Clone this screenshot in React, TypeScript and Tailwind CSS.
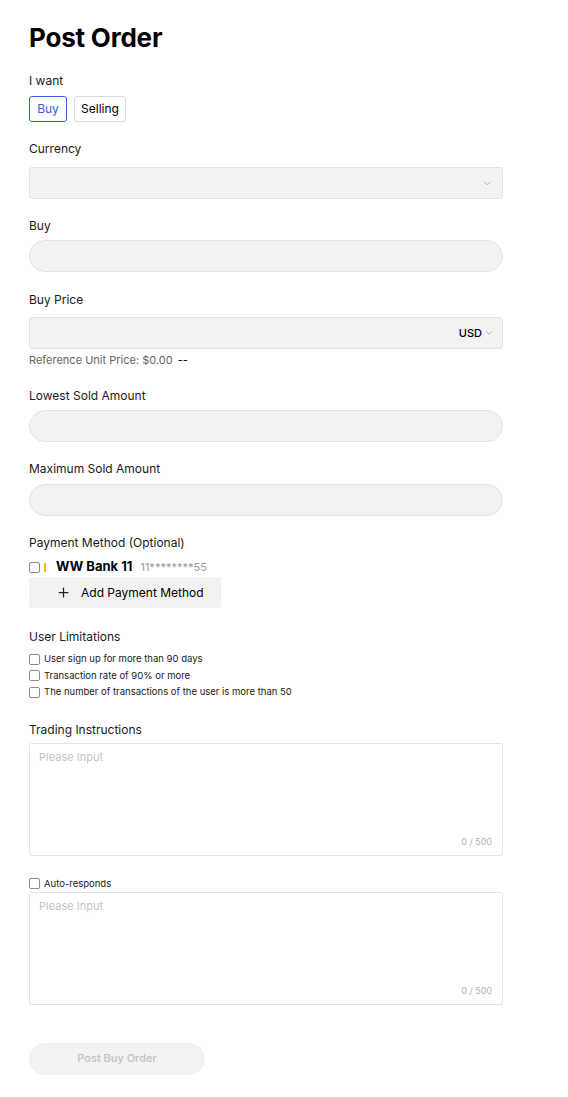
import React from 'react';
import { ChevronDown, Plus } from 'lucide-react';

const font = { fontFamily: 'Inter, "Noto Sans", sans-serif' };

function Label({ children, className = 'mb-[10px]' }: { children: React.ReactNode; className?: string }) {
    return <p className={`text-[12px] text-[#1a1a1a] leading-[16px] ${className}`}>{children}</p>;
}

function Pill() {
    return <div className="h-[32px] bg-[#f2f2f4] border border-[#e3e3e6] rounded-full" />;
}

function Check({ label, className = '' }: { label: string; className?: string }) {
    return (
        <label className={`flex items-center gap-[4px] text-[9.5px] text-[#1a1a1a] leading-[16px] ${className}`}>
            <span className="w-[11px] h-[11px] border border-[#8a8a8a] rounded-[2px] bg-white shrink-0" />
            {label}
        </label>
    );
}

function TextArea() {
    return (
        <div className="h-[113px] border border-[#e3e3e6] rounded-[3px] bg-white px-[9px] pt-[5px] pb-[6px] flex flex-col justify-between">
            <span className="text-[11px] text-[#c4c4c4]">Please Input</span>
            <span className="self-end text-[9px] text-[#b0b0b0] pr-[1px]">0 / 500</span>
        </div>
    );
}

export default function App() {
    return (
        <div style={font} className="bg-white min-h-[1097px] pl-[29px] pr-[65px] pt-[23px] text-[#111]">
            <h1 className="text-[26px] font-bold leading-[30px] tracking-[-0.2px] text-black">Post Order</h1>

            <div className="mt-[20px]">
                <p className="text-[12px] leading-[16px] text-[#1a1a1a]">I want</p>
                <div className="flex gap-[7px] mt-[7px]">
                    <button className="h-[26px] w-[38px] border border-[#3b5bdb] rounded-[3px] text-[12px] text-[#3b5bdb]">Buy</button>
                    <button className="h-[26px] w-[52px] border border-[#dcdcdc] rounded-[3px] text-[12px] text-black">Selling</button>
                </div>
            </div>

            <div className="mt-[19px]">
                <Label>Currency</Label>
                <div className="h-[32px] bg-[#f2f2f4] border border-[#e3e3e6] rounded-[3px] flex items-center justify-end pr-[9px]">
                    <ChevronDown className="w-[11px] h-[11px] text-[#a8a8a8]" strokeWidth={2} />
                </div>
            </div>

            <div className="mt-[19px]">
                <Label className="mb-[6px]">Buy</Label>
                <Pill />
            </div>

            <div className="mt-[20px]">
                <Label className="mb-[9px]">Buy Price</Label>
                <div className="h-[32px] bg-[#f2f2f4] border border-[#e3e3e6] rounded-[3px] flex items-center justify-end pr-[8px] gap-[2px]">
                    <span className="text-[11px] font-medium text-black">USD</span>
                    <ChevronDown className="w-[10px] h-[10px] text-[#a8a8a8]" strokeWidth={2} />
                </div>
                <p className="text-[11px] mt-[3px] leading-[16px] text-[#666]">
                    Reference Unit Price: $0.00 <span className="text-black ml-[2px]">--</span>
                </p>
            </div>

            <div className="mt-[20px]">
                <Label className="mb-[6px]">Lowest Sold Amount</Label>
                <Pill />
            </div>

            <div className="mt-[19px]">
                <Label className="mb-[7px]">Maximum Sold Amount</Label>
                <Pill />
            </div>

            <div className="mt-[19px]">
                <p className="text-[12px] leading-[16px] text-[#1a1a1a]">Payment Method (Optional)</p>
                <div className="flex items-center h-[18px] mt-[7px]">
                    <span className="w-[11px] h-[11px] border border-[#8a8a8a] rounded-[2px] bg-white shrink-0" />
                    <span className="w-[2px] h-[9px] bg-[#f0b90b] ml-[4px]" />
                    <span className="text-[13px] font-bold text-black ml-[10px]">WW Bank 11</span>
                    <span className="text-[11px] text-[#999] ml-[8px]">11********55</span>
                </div>
                <button className="mt-[1px] w-[192px] h-[31px] bg-[#f2f2f4] rounded-[3px] flex items-center pl-[27px] gap-[10px] text-[12px] text-black">
                    <Plus className="w-[15px] h-[15px] text-[#222]" strokeWidth={2} />
                    Add Payment Method
                </button>
            </div>

            <div className="mt-[21px]">
                <p className="text-[12px] leading-[16px] text-[#1a1a1a] mb-[6px]">User Limitations</p>
                <Check label="User sign up for more than 90 days" className="h-[16.5px]" />
                <Check label="Transaction rate of 90% or more" className="h-[16.5px]" />
                <Check label="The number of transactions of the user is more than 50" className="h-[16.5px]" />
            </div>

            <div className="mt-[21px]">
                <p className="text-[12px] leading-[16px] text-[#1a1a1a] mb-[5px]">Trading Instructions</p>
                <TextArea />
            </div>

            <div className="mt-[20px]">
                <Check label="Auto-responds" className="h-[16px] mb-[0px]" />
                <TextArea />
            </div>

            <button className="mt-[38px] w-[176px] h-[32px] rounded-full bg-[#f2f2f4] text-[11px] font-medium text-[#c2c2c2]">
                Post Buy Order
            </button>
        </div>
    );
}
